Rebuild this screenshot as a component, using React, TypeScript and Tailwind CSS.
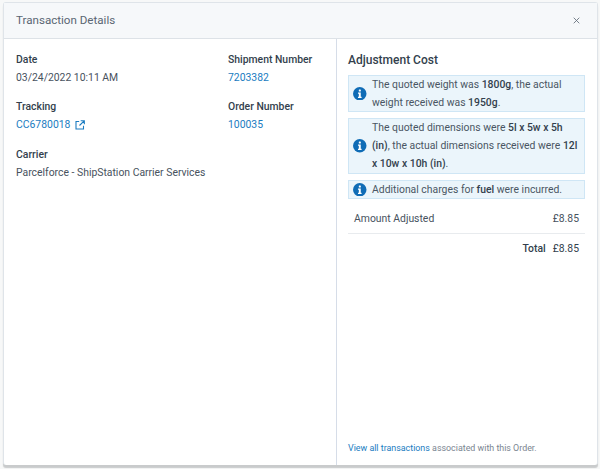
const Info = () => (
  <svg viewBox="0 0 16 16" className="h-[13.5px] w-[13.5px] shrink-0">
    <circle cx="8" cy="8" r="8" fill="#0f6cb6" />
    <rect x="6.9" y="3" width="2.4" height="2.4" rx="0.6" fill="#fff" />
    <path d="M5.9 6.6h3.3v5h1v1.4H5.9v-1.4h1v-3.6h-1z" fill="#fff" />
  </svg>
);

const External = () => (
  <svg viewBox="0 0 12 12" fill="none" stroke="currentColor" strokeWidth="1.3" className="h-[10px] w-[10px]">
    <path d="M5 1.8H1.2v9h9V7" />
    <path d="M6.8 .8h4.4v4.4M11 1 5.4 6.6" />
  </svg>
);

function Field({ label, children }: { label: string; children: React.ReactNode }) {
  return (
    <div>
      <div className="font-medium text-[#333f4d] leading-[17.8px]">{label}</div>
      <div className="leading-[17.8px]">{children}</div>
    </div>
  );
}

function Notice({ children }: { children: React.ReactNode }) {
  return (
    <div className="flex items-center gap-[5.5px] border border-[#cfe6f5] bg-[#ebf5fb] pl-[4px] pr-[4px] leading-[17.7px] text-[#4a5663]">
      <Info />
      <div>{children}</div>
    </div>
  );
}

export default function App() {
  return (
    <div className="h-[469px] w-[600px] bg-[#f7f8f8] pl-[3px] pr-[2px] pt-[2px] pb-[4px] font-['Roboto',sans-serif] text-[10.4px] text-[#47525e]">
      <div className="flex h-full flex-col rounded-[3px] border border-[#dfe4e9] border-b-0 bg-white shadow-[0_3px_1px_#c9cbcc]">
        <div className="flex h-[36px] shrink-0 items-center justify-between border-b border-[#dde2e7] bg-[#f6f8fa] pl-3 pr-[17px]">
          <h2 className="text-[11.6px] text-[#5a6673]">Transaction Details</h2>
          <svg viewBox="0 0 10 10" className="h-[7px] w-[7px] text-[#5f6b77]" stroke="currentColor" strokeWidth="1.2">
            <path d="M1 1l8 8M9 1l-8 8" />
          </svg>
        </div>
        <div className="flex min-h-0 flex-1">
          <div className="w-[333px] shrink-0 border-r border-[#d6dde8] pl-3 pt-[12px]">
            <div className="grid grid-cols-[212px_1fr] gap-y-[11.8px]">
              <Field label="Date">03/24/2022 10:11 AM</Field>
              <Field label="Shipment Number">
                <a className="text-[#1a7cc1]">7203382</a>
              </Field>
              <Field label="Tracking">
                <a className="flex items-center gap-[5px] text-[#1a7cc1]">
                  CC6780018 <External />
                </a>
              </Field>
              <Field label="Order Number">
                <a className="text-[#1a7cc1]">100035</a>
              </Field>
              <div className="col-span-2">
                <Field label="Carrier">Parcelforce - ShipStation Carrier Services</Field>
              </div>
            </div>
          </div>
          <div className="flex min-w-0 flex-1 flex-col pl-[11px] pr-[12px] pt-[12px] pb-[10px]">
            <div className="mb-[6px] text-[12px] font-medium leading-[18px] text-[#333f4d]">Adjustment Cost</div>
            <div className="flex flex-col gap-[6px]">
              <Notice>
                The quoted weight was <b className="font-medium text-[#333f4d]">1800g</b>, the actual weight received was{" "}
                <b className="font-medium text-[#333f4d]">1950g</b>.
              </Notice>
              <Notice>
                The quoted dimensions were <b className="font-medium text-[#333f4d]">5l x 5w x 5h (in)</b>, the actual dimensions received were{" "}
                <b className="font-medium text-[#333f4d]">12l x 10w x 10h (in)</b>.
              </Notice>
              <Notice>
                Additional charges for <b className="font-medium text-[#333f4d]">fuel</b> were incurred.
              </Notice>
            </div>
            <div className="mt-[6px] flex h-[29px] items-center justify-between border-b border-[#e8ebee] px-[6px]">
              <span>Amount Adjusted</span>
              <span>£8.85</span>
            </div>
            <div className="mt-[6px] flex justify-end gap-[7px] px-[6px] leading-[18px]">
              <span className="font-medium text-[#333f4d]">Total</span>
              <span className="text-[#333f4d]">£8.85</span>
            </div>
            <div className="mt-auto text-[8.9px] leading-[14px] text-[#7a8591]">
              <a className="text-[#1a7cc1]">View all transactions</a> associated with this Order.
            </div>
          </div>
        </div>
      </div>
    </div>
  );
}
